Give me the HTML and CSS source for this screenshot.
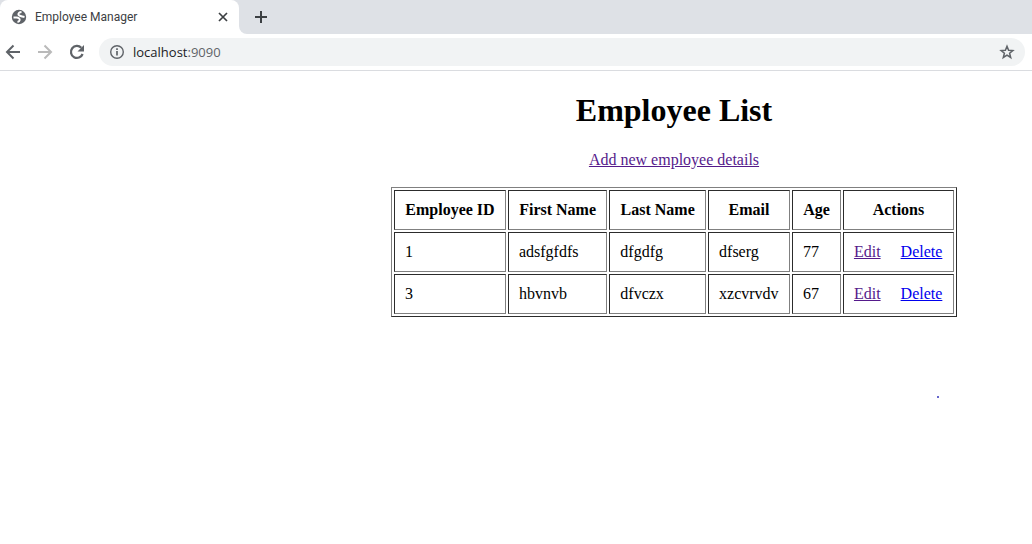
FILE: index.html
```
<!DOCTYPE html>
<html lang="en">
<head>
<meta charset="utf-8">
<title>Employee Manager</title>
<link rel="stylesheet" href="styles.css">
</head>
<body>
<header class="browser">
  <div class="tabs">
    <div class="tab">
      <svg class="icon" width="16" height="16" viewBox="0 0 16 16" aria-hidden="true"><circle cx="8" cy="8" r="7.200" fill="#5f6368"/><path d="M10.500 3C8.500 3.200 7.200 4 7.400 5.500C7.600 7 9.500 7 13.500 8M2.500 8.500H5.500C7.500 8.500 9 9.500 8.700 11C8.500 12.300 7.500 12.800 6.500 13" fill="none" stroke="#fff" stroke-width="1.900"/></svg>
      <span class="tab-title">Employee Manager</span>
      <button class="icon-button" type="button" aria-label="Close tab"><svg width="16" height="16" viewBox="0 0 16 16"><path d="M4 4l8 8M12 4l-8 8" stroke="#3c4043" stroke-width="1.7"/></svg></button>
    </div>
    <button class="icon-button new-tab" type="button" aria-label="New tab"><svg width="16" height="16" viewBox="0 0 16 16"><path d="M8 2v12M2 8h12" stroke="#3c4043" stroke-width="2"/></svg></button>
  </div>
  <div class="toolbar">
    <button class="icon-button" type="button" aria-label="Back"><svg width="16" height="16" viewBox="0 0 16 16"><path d="M15 8H2.5M8.5 1.5 2 8l6.500 6.500" fill="none" stroke="#5f6368" stroke-width="2"/></svg></button>
    <button class="icon-button" type="button" aria-label="Forward"><svg width="16" height="16" viewBox="0 0 16 16"><path d="M1 8h12.500M7.500 1.500 14 8l-6.500 6.500" fill="none" stroke="#bababa" stroke-width="2"/></svg></button>
    <button class="icon-button" type="button" aria-label="Reload"><svg width="16" height="16" viewBox="0 0 16 16"><path d="M13.600 10A6 6 0 1 1 12.300 3.800" fill="none" stroke="#5f6368" stroke-width="2.200"/><path d="M15 1v6.500H8.500Z" fill="#5f6368"/></svg></button>
    <div class="address">
      <svg class="icon" width="16" height="16" viewBox="0 0 16 16" aria-hidden="true"><circle cx="8" cy="8" r="6.300" fill="none" stroke="#5f6368" stroke-width="1.400"/><path d="M8 7v4.500M8 4.300v1.700" stroke="#5f6368" stroke-width="1.700"/></svg>
      <span class="url">localhost<span class="port">:9090</span></span>
      <button class="icon-button" type="button" aria-label="Bookmark"><svg width="16" height="16" viewBox="0 0 16 16"><path d="M8 2.200 9.600 6.200 13.900 6.500 10.600 9.300 11.700 13.500 8 11.200 4.300 13.500 5.400 9.300 2.100 6.500 6.400 6.200Z" fill="none" stroke="#5f6368" stroke-width="1.500"/></svg></button>
    </div>
  </div>
</header>
<main class="page">
  <h1 class="heading">Employee List</h1>
  <a class="visited" href="#new">Add new employee details</a>
  <table class="employees">
    <thead>
      <tr><th>Employee ID</th><th>First Name</th><th>Last Name</th><th>Email</th><th>Age</th><th>Actions</th></tr>
    </thead>
    <tbody>
      <tr><td>1</td><td>adsfgfdfs</td><td>dfgdfg</td><td>dfserg</td><td>77</td><td><a class="visited" href="#edit-1">Edit</a> &nbsp;&nbsp;&nbsp; <a class="link" href="#delete-1">Delete</a></td></tr>
      <tr><td>3</td><td>hbvnvb</td><td>dfvczx</td><td>xzcvrvdv</td><td>67</td><td><a class="visited" href="#edit-3">Edit</a> &nbsp;&nbsp;&nbsp; <a class="link" href="#delete-3">Delete</a></td></tr>
    </tbody>
  </table>
  <span class="dot"></span>
</main>
</body>
</html>
```
FILE: styles.css
```
body {
  margin: 0;
  background: #fff;
  color: #000;
  font: 16px/18px "Liberation Serif", "Times New Roman", serif;
}

.browser {
  border-bottom: 1px solid #dadce0;
}

/* The white strip shows behind the new-tab button's rounded lower corner. */
.tabs {
  display: flex;
  height: 34px;
  background: linear-gradient(#fff, #fff) 0 100% / 260px 50% no-repeat #dee1e6;
}

.tab {
  display: flex;
  align-items: center;
  box-sizing: border-box;
  width: 239px;
  padding: 0 8px 0 11px;
  gap: 8px;
  background: #fff;
  border-radius: 8px 8px 0 0;
}

.tab-title {
  flex: 1;
  font-family: Roboto, "Noto Sans", sans-serif;
  font-size: 12px;
  color: #3c4043;
  white-space: nowrap;
}

.icon {
  flex: none;
}

.icon-button {
  display: flex;
  flex: none;
  padding: 0;
  border: 0;
  background: none;
}

.new-tab {
  flex: 1;
  align-items: center;
  padding-left: 14px;
  background: #dee1e6;
  border-bottom-left-radius: 8px;
}

.toolbar {
  display: flex;
  align-items: center;
  gap: 16px;
  height: 36px;
  padding: 0 7px 0 5px;
}

.address {
  display: flex;
  flex: 1;
  align-items: center;
  gap: 8px;
  height: 28px;
  margin-left: -2px;
  padding: 0 10px;
  border-radius: 14px;
  background: #f1f3f4;
}

.url {
  flex: 1;
  font-family: "Open Sans", "Noto Sans", sans-serif;
  font-size: 13px;
  color: #202124;
}

.port {
  color: #5f6368;
}

.page {
  display: flex;
  flex-direction: column;
  align-items: center;
  padding: 21px 0 0 316px;
}

.heading {
  margin: 0 0 22px;
  font-size: 32px;
  line-height: 37px;
}

.visited {
  color: #551a8b;
}

.link {
  color: #0000ee;
}

.employees {
  min-width: 566px;
  box-sizing: border-box;
  margin-top: 18px;
  border: 1px outset #808080;
  border-spacing: 2px;
}

.employees th,
.employees td {
  padding: 10px;
  border: 1px inset #808080;
  white-space: nowrap;
}

.dot {
  width: 2px;
  height: 2px;
  margin: 79px 0 0 527px;
  border-radius: 1px;
  background: #3333bb;
}
```
